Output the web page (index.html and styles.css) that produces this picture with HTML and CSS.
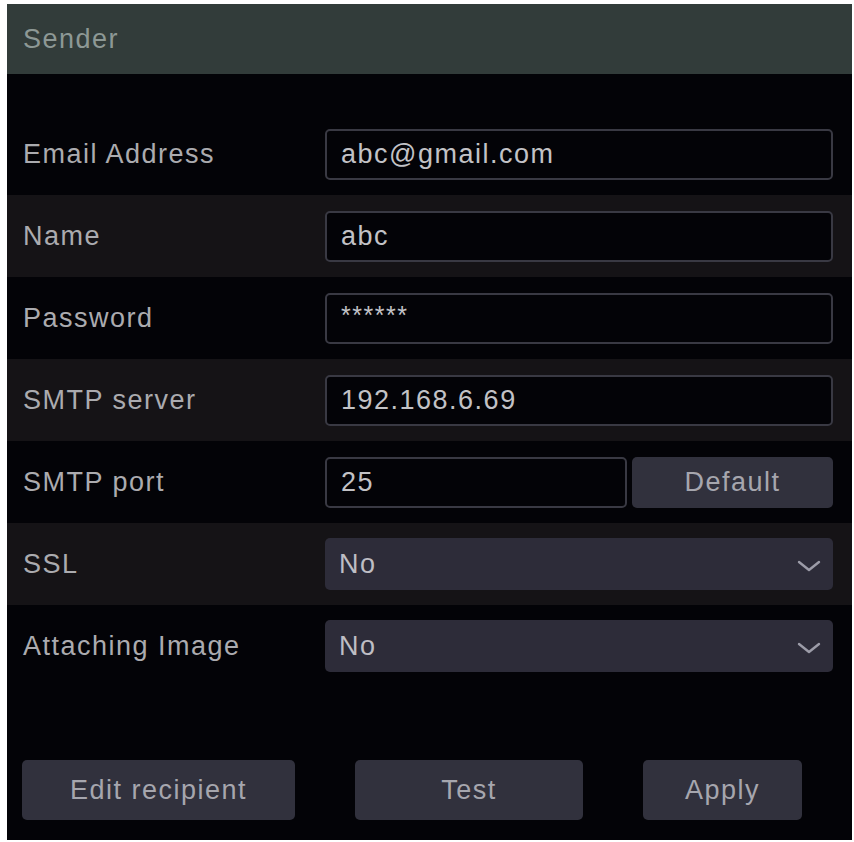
FILE: index.html
```html
<!DOCTYPE html>
<html>
<head>
    <title>Sender</title>
    <link rel="stylesheet" href="styles.css">
</head>
<body>
    <div class="panel">
        <div class="panel-title">Sender</div>

        <div class="fields">
            <div class="row">
                <label for="email">Email Address</label>
                <input type="text" id="email" value="abc@gmail.com">
            </div>
            <div class="row alt">
                <label for="name">Name</label>
                <input type="text" id="name" value="abc">
            </div>
            <div class="row">
                <label for="password">Password</label>
                <div class="field masked" id="password">******</div>
            </div>
            <div class="row alt">
                <label for="server">SMTP server</label>
                <input type="text" id="server" value="192.168.6.69">
            </div>
            <div class="row">
                <label for="port">SMTP port</label>
                <div class="port-group">
                    <input type="text" id="port" class="port-input" value="25">
                    <button class="btn btn-default">Default</button>
                </div>
            </div>
            <div class="row alt">
                <label>SSL</label>
                <div class="select">
                    <span>No</span>
                    <svg class="chevron" width="24" height="12" viewBox="0 0 24 12"><path d="M2 2 L12 10 L22 2" fill="none" stroke="#9c9ca8" stroke-width="2.4" stroke-linecap="round" stroke-linejoin="round"/></svg>
                </div>
            </div>
            <div class="row">
                <label>Attaching Image</label>
                <div class="select">
                    <span>No</span>
                    <svg class="chevron" width="24" height="12" viewBox="0 0 24 12"><path d="M2 2 L12 10 L22 2" fill="none" stroke="#9c9ca8" stroke-width="2.4" stroke-linecap="round" stroke-linejoin="round"/></svg>
                </div>
            </div>
        </div>

        <div class="actions">
            <button class="btn btn-edit">Edit recipient</button>
            <button class="btn btn-test">Test</button>
            <button class="btn btn-apply">Apply</button>
        </div>
    </div>
</body>
</html>
```

FILE: styles.css
```css
body {
    margin: 0;
    background-color: #fff;
    font-family: "Liberation Sans", Arial, sans-serif;
}
.panel {
    margin: 4px 2px 2px 7px;
    height: 836px;
    background-color: #030307;
    display: flex;
    flex-direction: column;
}
.panel-title {
    height: 70px;
    background-color: #323c3a;
    color: #8d9895;
    font-size: 27px;
    letter-spacing: 1.5px;
    padding-left: 16px;
    display: flex;
    align-items: center;
}
.fields {
    margin-top: 39px;
}
.row {
    height: 82px;
    display: flex;
    align-items: center;
    padding-right: 19px;
}
.row.alt {
    background-color: #151316;
}
label {
    width: 302px;
    padding-left: 16px;
    color: #ababaf;
    font-size: 27px;
    letter-spacing: 1.5px;
}
input[type="text"], .field {
    box-sizing: border-box;
    flex: 1;
    min-width: 0;
    height: 51px;
    padding: 0 14px;
    background-color: #030307;
    border: 2px solid #393943;
    border-radius: 5px;
    color: #c2c2c6;
    font-family: inherit;
    font-size: 27px;
    letter-spacing: 1.5px;
    outline: none;
}
.field.masked {
    display: flex;
    align-items: center;
    padding-bottom: 6px;
    font-size: 25px;
}
.port-group {
    flex: 1;
    display: flex;
    gap: 5px;
}
input.port-input {
    flex: none;
    width: 302px;
}
.btn-default {
    flex: 1;
    height: 51px;
}
.select {
    box-sizing: border-box;
    flex: 1;
    height: 52px;
    padding: 0 12px 0 14px;
    background-color: #2d2c39;
    border-radius: 5px;
    color: #bebec4;
    font-size: 27px;
    letter-spacing: 1.5px;
    display: flex;
    align-items: center;
    justify-content: space-between;
}
.chevron {
    margin-top: 4px;
}
.btn {
    padding: 0;
    background-color: #31313d;
    border: none;
    border-radius: 5px;
    color: #a6a6ae;
    font-family: inherit;
    font-size: 27px;
    letter-spacing: 1.5px;
    cursor: pointer;
}
.actions {
    margin-top: 73px;
    padding-left: 15px;
    display: flex;
    gap: 60px;
}
.actions .btn {
    height: 60px;
}
.btn-edit {
    width: 273px;
}
.btn-test {
    width: 228px;
}
.btn-apply {
    width: 159px;
}
```
